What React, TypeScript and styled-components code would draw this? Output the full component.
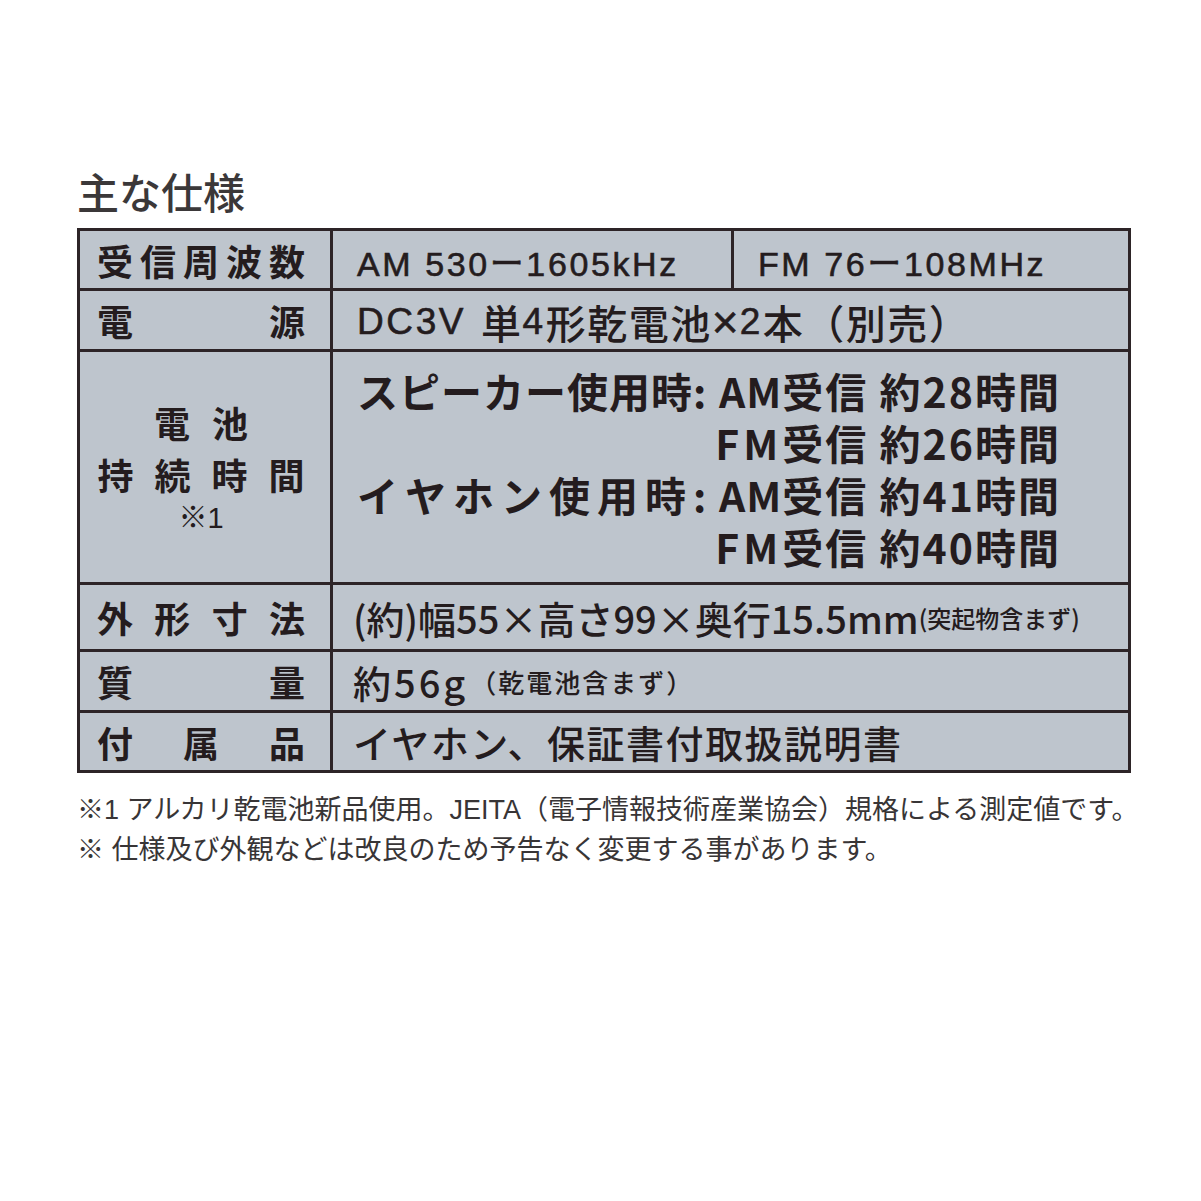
import React from 'react';
import styled, { createGlobalStyle } from 'styled-components';

const GlobalStyle = createGlobalStyle`
  html, body {
    margin: 0;
    padding: 0;
    background: #fff;
  }
  body {
    font-family: "Noto Sans CJK JP", sans-serif;
    color: #241c1e;
  }
`;

const Page = styled.div`
  padding: 170px 0 0 77px;
`;

const Title = styled.h2`
  margin: 0 0 16px 0;
  font-size: 42px;
  line-height: 42px;
  font-weight: 500;
  color: #3b3839;
`;

const Table = styled.div`
  display: grid;
  grid-template-columns: 250px 398px 394px;
  grid-template-rows: 57px 58px 230px 64px 58px 57px;
  gap: 3px;
  padding: 3px;
  width: fit-content;
  background: #2d2427;
`;

const Cell = styled.div<{ $col?: string }>`
  grid-column: ${(p) => p.$col || 'auto'};
  display: flex;
  align-items: center;
  background: #bec5cd;
  min-width: 0;
`;

const Label = styled(Cell)`
  justify-content: space-between;
  padding: 0 25px 0 17px;
  font-size: 36px;
  font-weight: 600;
  line-height: 1;
`;

const BatteryLabel = styled(Cell)`
  flex-direction: column;
  justify-content: center;
  padding: 0 30px 4px 22px;
  font-size: 36px;
  font-weight: 600;
`;

const Spread = styled.div<{ $gap: number }>`
  display: flex;
  gap: ${(p) => p.$gap}px;
  line-height: 52px;
`;

const Note = styled.div`
  margin-top: 2px;
  font-size: 29px;
  line-height: 32px;
  font-weight: 500;
  font-family: "Liberation Sans", "Noto Sans CJK JP", sans-serif;
`;

const Plain = styled(Cell)<{ $size?: number }>`
  padding: 3px 0 0 24px;
  font-family: "Liberation Sans", "Noto Sans CJK JP", sans-serif;
  font-size: ${(p) => p.$size || 34}px;
  letter-spacing: 2.6px;
  -webkit-text-stroke: 0.6px #241c1e;
  white-space: nowrap;
`;

const Cjk = styled.span<{ $lead?: boolean }>`
  margin-left: ${(p) => (p.$lead ? '15px' : '0')};
  font-family: "Noto Sans CJK JP", sans-serif;
  font-size: 40px;
  letter-spacing: 1.5px;
  -webkit-text-stroke: 0;
  font-weight: 500;
`;

const Times = styled.span`
  font-size: 46px;
  line-height: 1;
  letter-spacing: 1px;
`;

const Value = styled(Cell)<{ $spacing?: number }>`
  padding: 0 0 0 20px;
  font-size: 38px;
  font-weight: 500;
  letter-spacing: ${(p) => p.$spacing || 0}px;
  white-space: nowrap;
`;

const Small = styled.span<{ $size?: number; $spacing?: number }>`
  font-size: ${(p) => p.$size || 24}px;
  letter-spacing: ${(p) => p.$spacing || 0}px;
`;

const Grams = styled.span`
  letter-spacing: 3px;
  margin-right: 2px;
`;

const Usage = styled(Cell)`
  display: grid;
  grid-template-columns: auto auto auto;
  justify-content: start;
  align-content: center;
  padding: 2px 0 0 24px;
  font-size: 41px;
  font-weight: 700;
  line-height: 52px;
  letter-spacing: 1px;
`;

const Mode = styled.div`
  display: flex;
  justify-content: space-between;
  grid-column: 1;
  margin-right: 8px;
`;

const Band = styled.span<{ $wide?: boolean }>`
  grid-column: 2;
  justify-self: end;
  letter-spacing: ${(p) => (p.$wide ? '4px' : '1px')};
`;

const Time = styled.span`
  grid-column: 3;
  white-space: pre;
  letter-spacing: 2px;
`;

const Notes = styled.div`
  margin-top: 17px;
  font-size: 27px;
  line-height: 40px;
  color: #383536;
  font-family: "Liberation Sans", "Noto Sans CJK JP", sans-serif;
  white-space: nowrap;
`;

const chars = (s: string) => [...s].map((c, i) => <span key={i}>{c}</span>);

const App = () => {
  return (
    <Page>
      <GlobalStyle />
      <Title>主な仕様</Title>
      <Table>
        <Label>{chars('受信周波数')}</Label>
        <Plain>AM 530ー1605kHz</Plain>
        <Plain>FM 76ー108MHz</Plain>

        <Label>{chars('電源')}</Label>
        <Plain $col="2 / 4" $size={37}>
          DC3V<Cjk $lead>単</Cjk>4<Cjk>形乾電池</Cjk><Times>×</Times>2<Cjk>本（別売）</Cjk>
        </Plain>

        <BatteryLabel>
          <Spread $gap={22}>{chars('電池')}</Spread>
          <Spread $gap={21}>{chars('持続時間')}</Spread>
          <Note>※1</Note>
        </BatteryLabel>
        <Usage $col="2 / 4">
          <Mode>{chars('スピーカー使用時:')}</Mode>
          <Band>AM</Band>
          <Time>受信 約28時間</Time>
          <Band $wide>FM</Band>
          <Time>受信 約26時間</Time>
          <Mode>{chars('イヤホン使用時:')}</Mode>
          <Band>AM</Band>
          <Time>受信 約41時間</Time>
          <Band $wide>FM</Band>
          <Time>受信 約40時間</Time>
        </Usage>

        <Label>{chars('外形寸法')}</Label>
        <Value $col="2 / 4">
          (約)幅55×高さ99×奥行15.5mm<Small>(突起物含まず)</Small>
        </Value>

        <Label>{chars('質量')}</Label>
        <Value $col="2 / 4">
          <Grams>約56g</Grams>
          <Small $size={26} $spacing={2}>（乾電池含まず）</Small>
        </Value>

        <Label>{chars('付属品')}</Label>
        <Value $col="2 / 4" $spacing={1.5}>
          イヤホン、保証書付取扱説明書
        </Value>
      </Table>
      <Notes>
        <div>※1 アルカリ乾電池新品使用。JEITA（電子情報技術産業協会）規格による測定値です。</div>
        <div>※ 仕様及び外観などは改良のため予告なく変更する事があります。</div>
      </Notes>
    </Page>
  );
};

export default App;
